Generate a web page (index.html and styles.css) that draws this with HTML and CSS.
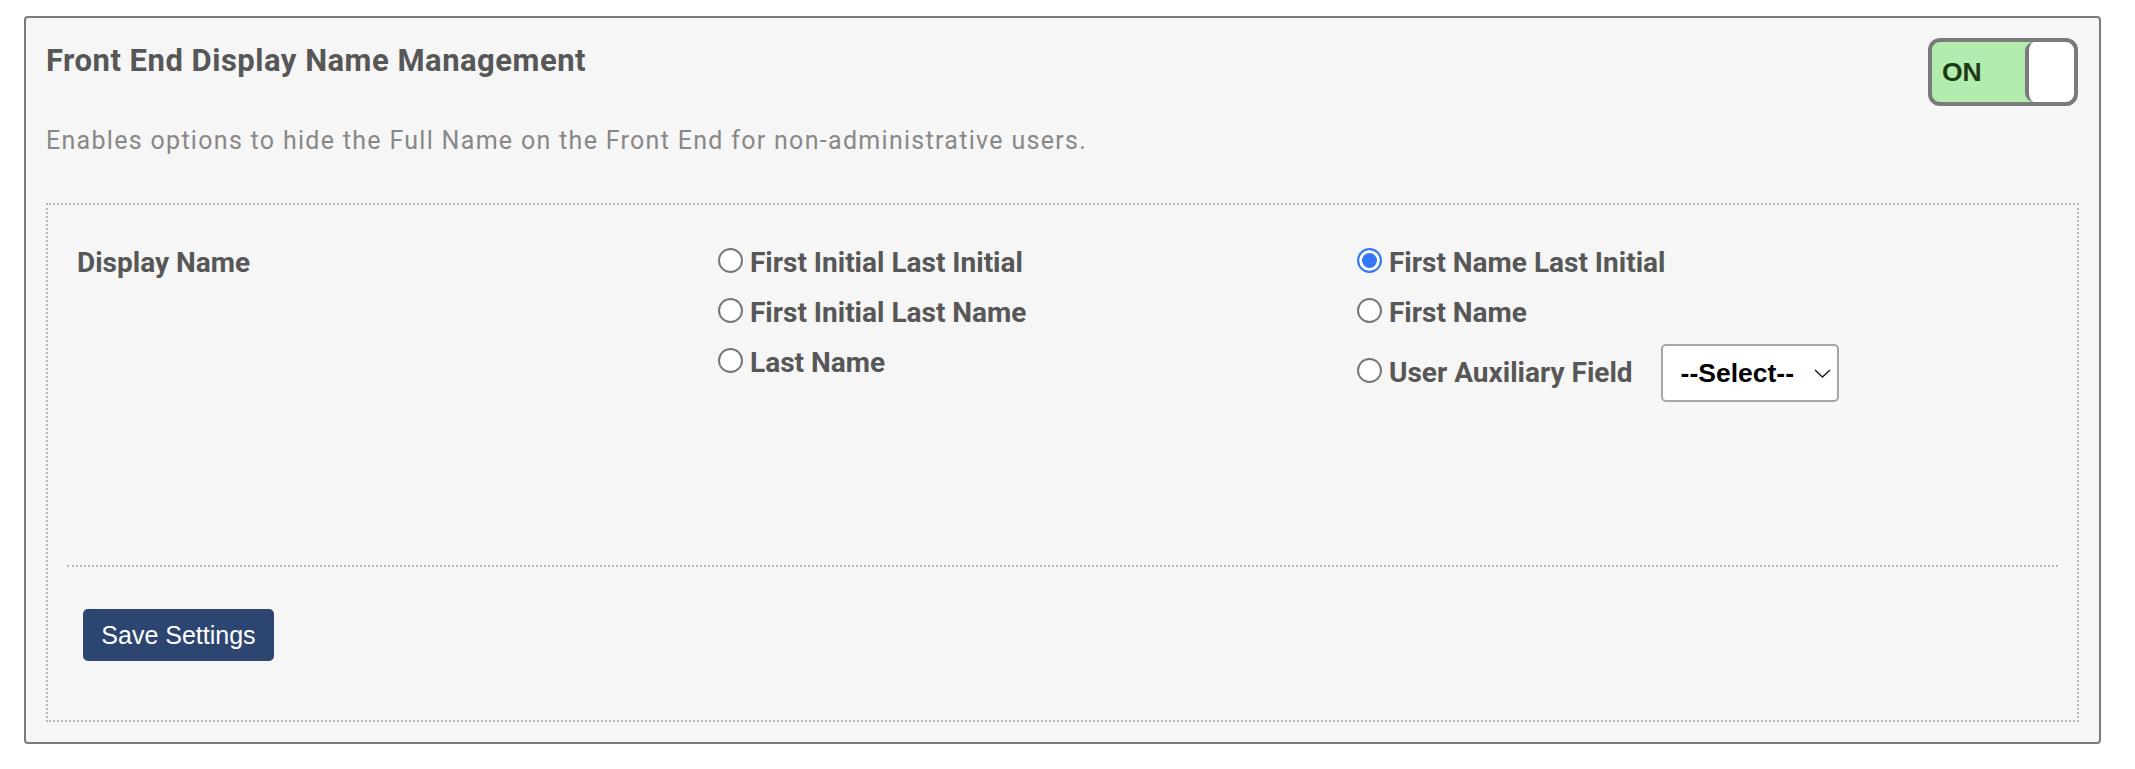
FILE: index.html
```html
<!DOCTYPE html>
<html lang="en">
<head>
  <meta charset="UTF-8">
  <meta name="viewport" content="width=device-width, initial-scale=1.0">
  <title>Front End Display Name Management</title>
  <link rel="stylesheet" href="styles.css">
</head>
<body>
  <main class="panel">
    <div class="panel-head">
      <div class="panel-intro">
        <h2 class="panel-title">Front End Display Name Management</h2>
        <p class="panel-desc">Enables options to hide the Full Name on the Front End for non-administrative users.</p>
      </div>
      <div class="toggle">
        <span class="toggle-label">ON</span>
        <span class="toggle-knob"></span>
      </div>
    </div>

    <form class="settings-box">
      <div class="options">
        <div class="option-title">Display Name</div>
        <div class="option-col">
          <label class="option"><input type="radio" name="display-name"><span>First Initial Last Initial</span></label>
          <label class="option"><input type="radio" name="display-name"><span>First Initial Last Name</span></label>
          <label class="option"><input type="radio" name="display-name"><span>Last Name</span></label>
        </div>
        <div class="option-col">
          <label class="option"><input type="radio" name="display-name" checked><span>First Name Last Initial</span></label>
          <label class="option"><input type="radio" name="display-name"><span>First Name</span></label>
          <div class="option option-aux">
            <label class="option-inline"><input type="radio" name="display-name"><span>User Auxiliary Field</span></label>
            <div class="select-wrap">
              <select class="aux-select">
                <option>--Select--</option>
              </select>
              <svg class="select-arrow" width="17" height="9" viewBox="0 0 17 9">
                <path d="M1 1l7.5 7 7.5-7" fill="none" stroke="#222" stroke-width="1.5"/>
              </svg>
            </div>
          </div>
        </div>
      </div>
      <div class="settings-foot">
        <button type="button" class="save-btn">Save Settings</button>
      </div>
    </form>
  </main>
</body>
</html>
```

FILE: styles.css
```css
* {
  box-sizing: border-box;
  --panel-background-color: #f6f6f6;
  --panel-border-color: #7a7a7a;
  --title-color: #575757;
  --desc-color: #888;
  --dotted-color: #b8b8b8;
  --radio-blue: #3478f6;
  --button-color: #2c4571;
}
body {
    margin: 0;
    padding: 16px 34px 26px 24px;
    background-color: #fff;
    font-family: Roboto, "Liberation Sans", sans-serif;
}

.panel {
    padding: 20px;

    border: 2px solid var(--panel-border-color);
    border-radius: 4px;
    background-color: var(--panel-background-color);
}

.panel-head {
    display: flex;
    justify-content: space-between;
    align-items: flex-start;
}
.panel-title {
    margin: 5px 0 0 0;

    color: var(--title-color);
    font-size: 31px;
    font-weight: 700;
    line-height: 36px;
    letter-spacing: 0.5px;
}
.panel-desc {
    margin: 47px 0 0 0;

    color: var(--desc-color);
    font-size: 25px;
    line-height: 30px;
    letter-spacing: 1.3px;
}

/* on / off switch */
.toggle {
    display: flex;
    width: 150px;
    height: 68px;
    margin-right: 1px;
    overflow: hidden;

    border: 4px solid var(--panel-border-color);
    border-radius: 12px;
    background-color: #b2ecae;
}
.toggle-label {
    flex: 1;
    align-self: center;
    padding-left: 10px;

    color: #1c3a17;
    font-family: "Liberation Sans", Arial, sans-serif;
    font-size: 26.5px;
    font-weight: 700;
}
.toggle-knob {
    width: 49px;

    border-left: 4px solid var(--panel-border-color);
    border-radius: 9px;
    background-color: #fff;
}

.settings-box {
    margin-top: 47px;
    padding: 0 19px;

    border: 2px dotted var(--dotted-color);
}

.options {
    display: grid;
    grid-template-columns: 641px 639px 1fr;
    padding: 40px 10px 163px 10px;

    color: var(--title-color);
    font-size: 28px;
    font-weight: 700;
    line-height: 36px;
}
.option-col {
    display: flex;
    flex-direction: column;
    gap: 14px;
}
.option,
.option-inline {
    display: flex;
    align-items: flex-start;
    gap: 7px;
}
.option-aux {
    align-items: center;
    margin-top: -1px;
    gap: 28px;
}

input[type="radio"] {
    appearance: none;
    -webkit-appearance: none;
    flex-shrink: 0;
    width: 25px;
    height: 25px;
    margin: 3px 0 0 0;

    border: 2px solid #777;
    border-radius: 50%;
    background-color: #fff;
}
input[type="radio"]:checked {
    border-color: var(--radio-blue);
    background-color: var(--radio-blue);
    box-shadow: inset 0 0 0 3px #fff;
}

.select-wrap {
    position: relative;
}
.aux-select {
    appearance: none;
    -webkit-appearance: none;
    width: 178px;
    height: 58px;
    padding: 0 0 0 18px;

    border: 2px solid #a6a6a6;
    border-radius: 5px;
    background-color: #fff;
    color: #000;
    font-family: "Liberation Sans", Arial, sans-serif;
    font-size: 26.5px;
    font-weight: 700;
}
.select-arrow {
    position: absolute;
    right: 8px;
    top: 25px;
    pointer-events: none;
}

.settings-foot {
    padding: 42px 16px 59px 16px;

    border-top: 2px dotted var(--dotted-color);
}
.save-btn {
    width: 191px;
    height: 52px;
    padding: 0;

    border: none;
    border-radius: 5px;
    background-color: var(--button-color);
    color: #fff;
    font-family: "Liberation Sans", Arial, sans-serif;
    font-size: 25px;
}
```
